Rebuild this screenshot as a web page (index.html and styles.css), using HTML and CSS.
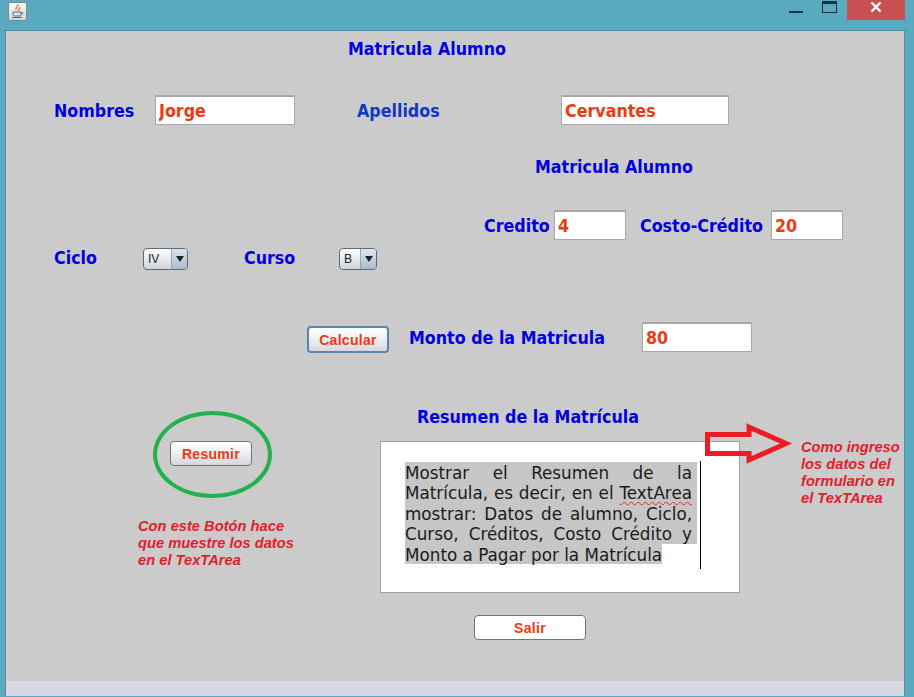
FILE: index.html
```html
<!DOCTYPE html>
<html lang="es">
<head>
<meta charset="utf-8">
<title>Matricula Alumno</title>
<link rel="stylesheet" href="styles.css">
</head>
<body>
<div class="window">
  <header class="titlebar">
    <div class="app-icon">
      <svg width="19" height="19" viewBox="0 0 19 19">
        <path d="M10 2c1 2-3 3-2 6M12 5c0 2-2 2-1.500 4" fill="none" stroke="#e0752a" stroke-width="1.300"/>
        <path d="M5 10h8v2.500c0 1-1 1.500-2 1.500H7c-1 0-2-.5-2-1.500z" fill="none" stroke="#4d6f92" stroke-width="1"/>
        <path d="M13 10.500h1.500c1 0 1 2-1.500 2" fill="none" stroke="#4d6f92" stroke-width=".8"/>
        <path d="M4 15.500h10" stroke="#4d6f92" stroke-width="1"/>
      </svg>
    </div>
    <div class="win-min"></div>
    <div class="win-max"></div>
    <div class="win-close">
      <svg width="12" height="10" viewBox="0 0 12 10"><path d="M1.500 0.500l9 9M10.500 0.500l-9 9" stroke="#fff" stroke-width="2.400"/></svg>
    </div>
  </header>
  <main class="panel">
    <div class="form">
      <div class="lbl t-title">Matricula Alumno</div>
      <div class="lbl t-nombres">Nombres</div>
      <input class="field f-nombres" value="Jorge" aria-label="Nombres">
      <div class="lbl t-apellidos">Apellidos</div>
      <input class="field f-apellidos" value="Cervantes" aria-label="Apellidos">
      <div class="lbl t-sub">Matricula Alumno</div>
      <div class="lbl t-credito">Credito</div>
      <input class="field f-credito" value="4" aria-label="Credito">
      <div class="lbl t-costo">Costo-Crédito</div>
      <input class="field f-costo" value="20" aria-label="Costo-Crédito">
      <div class="lbl t-ciclo">Ciclo</div>
      <div class="combo c-ciclo"><span class="combo-val">IV</span><span class="combo-btn"><i class="tri"></i></span></div>
      <div class="lbl t-curso">Curso</div>
      <div class="combo c-curso"><span class="combo-val">B</span><span class="combo-btn"><i class="tri"></i></span></div>
      <button class="btn b-calcular">Calcular</button>
      <div class="lbl t-monto">Monto de la Matricula</div>
      <input class="field f-monto" value="80" aria-label="Monto de la Matricula">
      <div class="lbl t-resumen">Resumen de la Matrícula</div>
      <div class="ring"></div>
      <button class="btn b-resumir">Resumir</button>
      <p class="note n-left">Con este Botón hace<br>que muestre los datos<br>en el TexTArea</p>
      <div class="textarea">
        <div class="sel">
          <div class="line">Mostrar el Resumen de la</div>
          <div class="line">Matrícula, es decir, en el <span class="squiggle">TextArea</span></div>
          <div class="line">mostrar: Datos de alumno, Ciclo,</div>
          <div class="line">Curso, Créditos, Costo Crédito y</div>
          <div class="line-last"><span class="sel-end">Monto a Pagar por la Matrícula</span></div>
        </div>
      </div>
      <svg class="arrow" width="90" height="48" viewBox="0 0 90 48">
        <path d="M2.500 12.500H44V5L81 21.500 44 38V31.500H2.500z" fill="none" stroke="#ed1c24" stroke-width="5"/>
      </svg>
      <p class="note n-right">Como ingreso<br>los datos del<br>formulario en<br>el TexTArea</p>
      <button class="btn b-salir">Salir</button>
    </div>
    <div class="statusbar"></div>
  </main>
</div>
</body>
</html>
```
FILE: styles.css
```css
* { box-sizing: border-box; }
html, body { margin: 0; padding: 0; }
body { width: 914px; height: 697px; overflow: hidden; }
.window {
  width: 914px; height: 697px; background: #5aaabf;
  display: flex; flex-direction: column;
  padding: 0 9px 1px 5px;
}
.titlebar { height: 30px; flex: none; display: flex; align-items: flex-start; position: relative; }
.app-icon {
  width: 19px; height: 19px; margin: 2px 0 0 3px;
  background: linear-gradient(#fafafa, #cfd4d8);
  border: 1px solid #7c8a90; border-radius: 2px;
  display: flex; align-items: center; justify-content: center;
}
.app-icon svg { flex: none; }
.win-min { width: 14px; height: 2px; background: #12323e; margin: 11px 0 0 762px; }
.win-max { width: 15px; height: 12px; border: 1px solid #12323e; border-top-width: 3px; margin: 1px 0 0 19px; }
.win-close {
  width: 58px; height: 20px; background: #c75050; margin-left: 10px;
  display: flex; align-items: center; justify-content: center; padding-bottom: 7px;
}
.panel {
  flex: 1; background: #cbcbcb; display: flex; flex-direction: column;
  border-top: 1px solid #4f8fa2; border-left: 1px solid #4f8fa2; border-right: 1px solid #4f8fa2;
}
.form { flex: 1; position: relative; }
.statusbar { height: 15px; background: #d5d8e0; flex: none; }

/* The form is a free canvas (absolute layout): origin is page (6,31). */
.lbl {
  position: absolute; font: bold 17.700px/20px "DejaVu Sans Condensed", "DejaVu Sans", sans-serif;
  color: #0000e0; white-space: nowrap;
}
.t-title { left: 342px; top: 8px; }
.t-nombres { left: 48px; top: 70px; }
.t-apellidos { left: 351px; top: 70px; color: #1038c8; }
.t-sub { left: 529px; top: 126px; }
.t-credito { left: 478px; top: 185px; }
.t-costo { left: 634px; top: 185px; }
.t-ciclo { left: 48px; top: 217px; }
.t-curso { left: 238px; top: 217px; }
.t-monto { left: 403px; top: 297px; }
.t-resumen { left: 411px; top: 376px; }

.field {
  position: absolute; background: #fff; border: 1px solid #a8a8a8; padding: 0 0 0 3px; margin: 0;
  font: bold 17.700px "DejaVu Sans Condensed", "DejaVu Sans", sans-serif; color: #ee3a10; outline: 0;
  border-top-width: 2px;
}
.f-nombres { left: 149px; top: 64px; width: 140px; height: 30px; }
.f-apellidos { left: 555px; top: 64px; width: 168px; height: 30px; }
.f-credito { left: 548px; top: 179px; width: 72px; height: 30px; }
.f-costo { left: 765px; top: 179px; width: 72px; height: 30px; }
.f-monto { left: 636px; top: 291px; width: 110px; height: 30px; }

.combo {
  position: absolute; height: 22px; display: flex; border: 1px solid #5d6c78; border-radius: 4px; overflow: hidden;
  background: linear-gradient(#fff, #e3e6ea 60%, #cdd2d8);
}
.c-ciclo { left: 137px; top: 217px; width: 45px; }
.c-curso { left: 333px; top: 217px; width: 38px; }
.combo-val { flex: 1; font: 12px/21px "Liberation Sans", sans-serif; padding-left: 4px; color: #222; }
.combo-btn {
  width: 16px; flex: none; display: flex; align-items: center; justify-content: center;
  background: linear-gradient(#dfe6ec, #a9bccb); border-left: 1px solid #9aa8b4;
}
.tri { width: 0; height: 0; border-style: solid; border-width: 6px 4px 0 4px; border-color: #222 transparent transparent; }

.btn {
  position: absolute; margin: 0; padding: 0; border: 1px solid #6f7478; border-radius: 4px;
  font: bold 14px "Liberation Sans", sans-serif; letter-spacing: 0.300px; color: #ee3a10;
  background: linear-gradient(#fff, #eef0f3 45%, #d5d8de);
}
.b-calcular { left: 301px; top: 295px; width: 82px; height: 27px; border: 2px solid #5a85ad; }
.b-resumir { left: 164px; top: 410px; width: 82px; height: 25px; }
.b-salir { left: 468px; top: 584px; width: 112px; height: 25px; background: #fff; }

.ring { position: absolute; left: 147px; top: 380px; width: 119px; height: 87px; border: 4px solid #22b14c; border-radius: 50%; }

.note {
  position: absolute; margin: 0; font: italic bold 14.700px/17px "Liberation Sans", sans-serif; color: #e3202a; white-space: nowrap;
}
.n-left { left: 132px; top: 487px; }
.n-right { left: 795px; top: 408px; }

.textarea {
  position: absolute; left: 374px; top: 410px; width: 360px; height: 152px;
  background: #fff; border: 1px solid #a0a0a0; padding: 20px 0 0 24px;
}
.sel { width: 292px; font: 16.800px/18.400px "DejaVu Sans", sans-serif; color: #1a1a1a; position: relative; }
.sel::after { content: ""; position: absolute; left: 295px; top: -1px; width: 1px; height: 108px; background: #000; }
.line { background: #c6c6c6; padding: 2px 5px 0 0; text-align: justify; text-align-last: justify; white-space: nowrap; }
.line-last { white-space: nowrap; }
.sel-end { background: #c6c6c6; display: inline-block; padding-top: 2px; }
.squiggle { text-decoration: underline wavy #d8302c 1px; text-underline-offset: 2px; }
.arrow { position: absolute; left: 699px; top: 391px; }
```
